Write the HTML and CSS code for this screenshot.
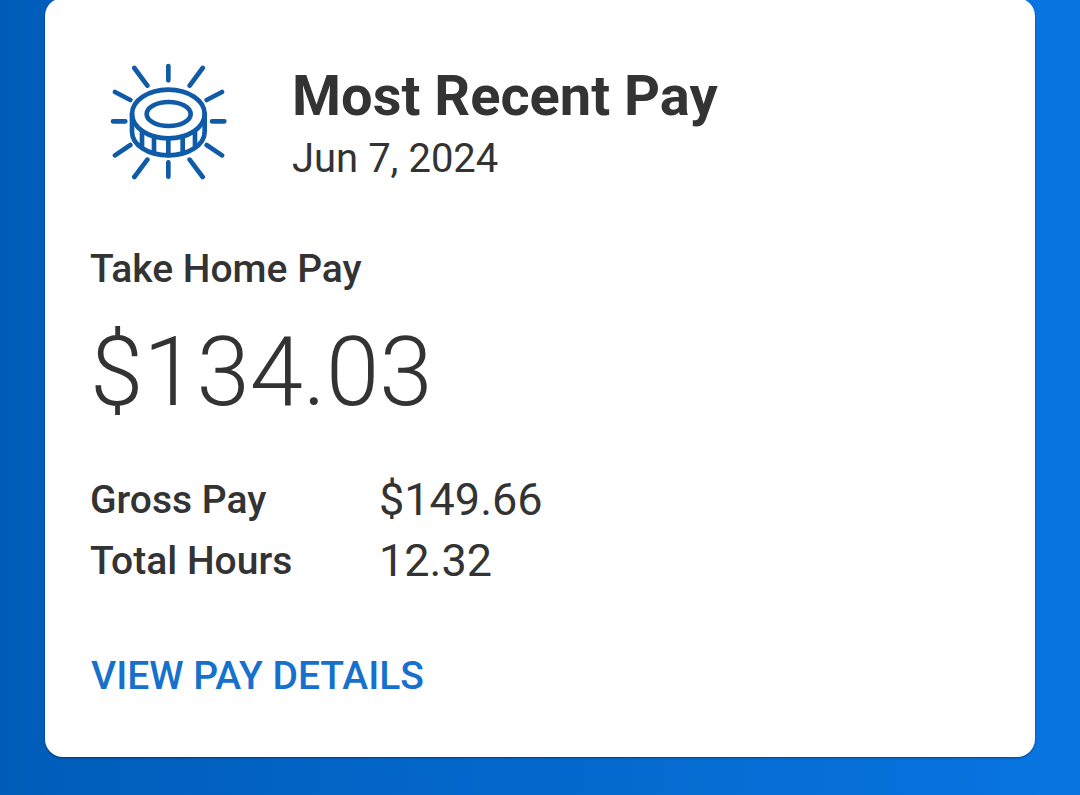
FILE: index.html
```html
<!DOCTYPE html>
<html lang="en">
<head>
    <meta charset="UTF-8">
    <meta name="viewport" content="width=device-width, initial-scale=1.0">
    <title>Most Recent Pay</title>
    <link rel="stylesheet" href="styles.css">
</head>
<body>
    <main class="pay-card">
        <header class="card-header">
            <svg class="coin-icon" viewBox="30 24 351 351" aria-hidden="true">
                <!-- rays -->
                <path d="M205 33V76M205 322V365M39 199H76M336 199H373M103 39L142 92M308 39L269 92M45 111L91 135M366 111L320 135M45 301L91 270M366 301L320 270M103 366L142 314M308 366L269 314"/>
                <!-- coin -->
                <ellipse cx="205" cy="177" rx="109" ry="73"/>
                <ellipse cx="206" cy="177" rx="66" ry="36"/>
                <path d="M96 177V230C96 270 145 301 205 301S314 270 314 230V177"/>
                <path d="M126 228V276M162 244V294M205 250V301M248 244V294M285 228V276"/>
            </svg>
            <div>
                <h1>Most Recent Pay</h1>
                <p class="pay-date">Jun 7, 2024</p>
            </div>
        </header>
        <h2>Take Home Pay</h2>
        <p class="amount">$134.03</p>
        <dl class="pay-summary">
            <dt>Gross Pay</dt>
            <dd>$149.66</dd>
            <dt>Total Hours</dt>
            <dd>12.32</dd>
        </dl>
        <a href="#" class="details-link">VIEW PAY DETAILS</a>
    </main>
</body>
</html>
```
FILE: styles.css
```css
* {
    box-sizing: border-box;
}
body {
    margin: 0;
    padding: 0 45px 38px;
    min-height: 100vh;
    font-family: Roboto, sans-serif;
    color: #333;
    background: linear-gradient(to right, #005cb9, #0875e1);
}
h1, h2, p, dl, dd {
    margin: 0;
}
.pay-card {
    display: flow-root;
    margin-top: -2px;
    padding: 65px 45px 51px;
    background-color: white;
    border-radius: 18px;
    box-shadow: 0 1px 2px rgba(0,0,0,0.4);
}
.card-header {
    display: flex;
    gap: 65px;
    padding-left: 20px;
}
.coin-icon {
    width: 117px;
    height: 117px;
    fill: none;
    stroke: #0f5ba8;
    stroke-width: 14;
    stroke-linecap: round;
}
h1 {
    font-size: 56px;
    line-height: 66px;
    font-weight: 700;
}
.pay-date {
    font-size: 40px;
    line-height: 60px;
}
h2 {
    margin-top: 50px;
    font-size: 39px;
    line-height: 60px;
    font-weight: 500;
}
.amount {
    margin-top: 17px;
    font-size: 96px;
    line-height: 112px;
    font-weight: 300;
}
.pay-summary {
    display: grid;
    grid-template-columns: 289px 1fr;
    row-gap: 1px;
    margin-top: 42px;
}
dt {
    font-size: 39px;
    line-height: 60px;
    font-weight: 500;
}
dd {
    font-size: 45px;
    line-height: 60px;
}
.details-link {
    display: inline-block;
    margin: 55px 1px 0;
    font-size: 39px;
    line-height: 60px;
    font-weight: 500;
    color: #1671cc;
    text-decoration: none;
}
.details-link:hover {
    text-decoration: underline;
}
```
